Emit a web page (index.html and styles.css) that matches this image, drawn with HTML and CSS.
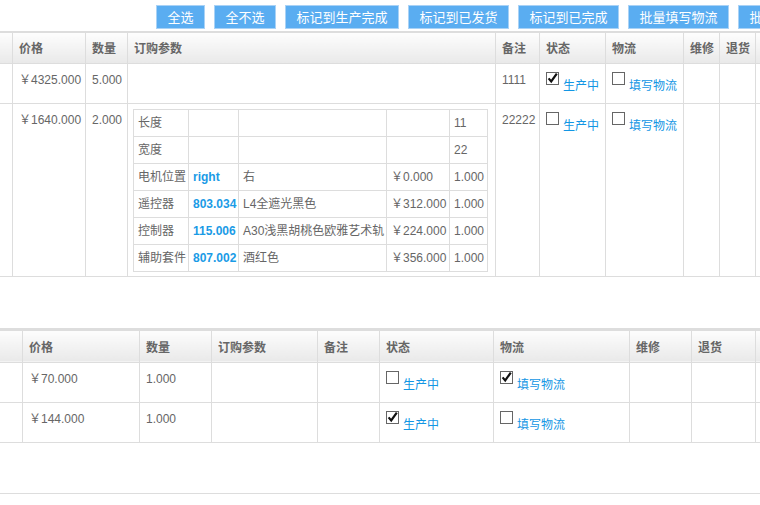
FILE: index.html
```html
<!DOCTYPE html>
<html lang="zh-CN">
<head>
<meta charset="utf-8">
<title>订单列表</title>
<link rel="stylesheet" href="styles.css">
</head>
<body>
<div class="page">
  <div class="toolbar">
    <button class="btn">全选</button>
    <button class="btn">全不选</button>
    <button class="btn">标记到生产完成</button>
    <button class="btn">标记到已发货</button>
    <button class="btn">标记到已完成</button>
    <button class="btn">批量填写物流</button>
    <button class="btn">批量打印</button>
  </div>

  <table class="orders t1">
    <colgroup>
      <col class="w13"><col class="w73"><col class="w42"><col class="w368"><col class="w44"><col class="w66"><col class="w78"><col class="w36"><col class="w36"><col class="w60">
    </colgroup>
    <thead>
      <tr><th></th><th>价格</th><th>数量</th><th>订购参数</th><th>备注</th><th>状态</th><th>物流</th><th>维修</th><th>退货</th><th></th></tr>
    </thead>
    <tbody>
      <tr class="row">
        <td></td><td>￥4325.000</td><td>5.000</td><td></td><td>1111</td>
        <td class="chk"><span class="cb"><svg viewBox="0 0 13 13" width="13" height="13"><rect x="0.5" y="0.5" width="12" height="12" fill="#fff" stroke="#666"/><path d="M2.6 6.4 L5.2 9.4 L10.8 1.6" fill="none" stroke="#111" stroke-width="2.2"/></svg></span><a class="lnk">生产中</a></td>
        <td class="chk"><span class="cb"><svg viewBox="0 0 13 13" width="13" height="13"><rect x="0.5" y="0.5" width="12" height="12" fill="#fff" stroke="#666"/></svg></span><a class="lnk">填写物流</a></td>
        <td></td><td></td><td></td>
      </tr>
      <tr>
        <td></td><td>￥1640.000</td><td>2.000</td>
        <td class="params">
          <table class="sub">
            <colgroup><col class="s55"><col class="s50"><col class="s148"><col class="s63"><col class="s38"></colgroup>
            <tr><td>长度</td><td></td><td></td><td></td><td>11</td></tr>
            <tr><td>宽度</td><td></td><td></td><td></td><td>22</td></tr>
            <tr><td>电机位置</td><td class="val">right</td><td>右</td><td>￥0.000</td><td>1.000</td></tr>
            <tr><td>遥控器</td><td class="val">803.034</td><td>L4全遮光黑色</td><td>￥312.000</td><td>1.000</td></tr>
            <tr><td>控制器</td><td class="val">115.006</td><td>A30浅黑胡桃色欧雅艺术轨</td><td>￥224.000</td><td>1.000</td></tr>
            <tr><td>辅助套件</td><td class="val">807.002</td><td>酒红色</td><td>￥356.000</td><td>1.000</td></tr>
          </table>
        </td>
        <td>22222</td>
        <td class="chk"><span class="cb"><svg viewBox="0 0 13 13" width="13" height="13"><rect x="0.5" y="0.5" width="12" height="12" fill="#fff" stroke="#666"/></svg></span><a class="lnk">生产中</a></td>
        <td class="chk"><span class="cb"><svg viewBox="0 0 13 13" width="13" height="13"><rect x="0.5" y="0.5" width="12" height="12" fill="#fff" stroke="#666"/></svg></span><a class="lnk">填写物流</a></td>
        <td></td><td></td><td></td>
      </tr>
    </tbody>
  </table>

  <table class="orders t2">
    <colgroup>
      <col class="w23"><col class="w117"><col class="w72"><col class="w106"><col class="w62"><col class="w114"><col class="w136"><col class="w62"><col class="w64"><col class="w60">
    </colgroup>
    <thead>
      <tr><th></th><th>价格</th><th>数量</th><th>订购参数</th><th>备注</th><th>状态</th><th>物流</th><th>维修</th><th>退货</th><th></th></tr>
    </thead>
    <tbody>
      <tr class="row">
        <td></td><td>￥70.000</td><td>1.000</td><td></td><td></td>
        <td class="chk"><span class="cb"><svg viewBox="0 0 13 13" width="13" height="13"><rect x="0.5" y="0.5" width="12" height="12" fill="#fff" stroke="#666"/></svg></span><a class="lnk">生产中</a></td>
        <td class="chk"><span class="cb"><svg viewBox="0 0 13 13" width="13" height="13"><rect x="0.5" y="0.5" width="12" height="12" fill="#fff" stroke="#666"/><path d="M2.6 6.4 L5.2 9.4 L10.8 1.6" fill="none" stroke="#111" stroke-width="2.2"/></svg></span><a class="lnk">填写物流</a></td>
        <td></td><td></td><td></td>
      </tr>
      <tr class="row">
        <td></td><td>￥144.000</td><td>1.000</td><td></td><td></td>
        <td class="chk"><span class="cb"><svg viewBox="0 0 13 13" width="13" height="13"><rect x="0.5" y="0.5" width="12" height="12" fill="#fff" stroke="#666"/><path d="M2.6 6.4 L5.2 9.4 L10.8 1.6" fill="none" stroke="#111" stroke-width="2.2"/></svg></span><a class="lnk">生产中</a></td>
        <td class="chk"><span class="cb"><svg viewBox="0 0 13 13" width="13" height="13"><rect x="0.5" y="0.5" width="12" height="12" fill="#fff" stroke="#666"/></svg></span><a class="lnk">填写物流</a></td>
        <td></td><td></td><td></td>
      </tr>
    </tbody>
  </table>

  <div class="sep"></div>
</div>
</body>
</html>
```

FILE: styles.css
```css
* { box-sizing: border-box; }
html, body { margin: 0; padding: 0; background: #fff; }
body {
  font-family: "Liberation Sans", "Noto Sans CJK SC", sans-serif;
  font-size: 12px;
  color: #666;
}
.page { width: 760px; overflow: hidden; }

.toolbar {
  display: flex;
  gap: 9px;
  height: 31px;
  padding: 5px 0 0 156px;
  white-space: nowrap;
}
.btn {
  flex: none;
  height: 24px;
  padding: 0 10.5px;
  border: 1px solid #a9d2f6;
  background: #5aadf1;
  color: #fff;
  font-family: "Noto Sans CJK SC", "Liberation Sans", sans-serif;
  font-size: 13px;
  line-height: 22px;
  cursor: pointer;
}

.orders {
  border-collapse: collapse;
  table-layout: fixed;
  width: 816px;
  margin: 0 0 50px -1px;
}
.t1 { margin-bottom: 51px; }
.orders th {
  height: 31px;
  padding: 0 6px;
  text-align: left;
  font-weight: bold;
  color: #666;
  white-space: nowrap;
  overflow: hidden;
  background: linear-gradient(#fdfdfd, #e9e9e9);
  border: 1px solid #ddd;
  border-top: 2px solid #ddd;
}
.t2 th { height: 33px; border-top-width: 3px; }
.orders td {
  border: 1px solid #ddd;
  padding: 6px 6px 4px;
  line-height: 20px;
  vertical-align: top;
  white-space: nowrap;
  overflow: hidden;
}
.orders tr.row > td { height: 40px; }
.orders td.params { padding: 5px 6px 4px 5px; }

.w13 { width: 13px; } .w23 { width: 23px; }
.w73 { width: 73px; } .w42 { width: 42px; } .w368 { width: 368px; }
.w44 { width: 44px; } .w66 { width: 66px; } .w78 { width: 78px; }
.w36 { width: 36px; } .w60 { width: 60px; }
.w117 { width: 117px; } .w72 { width: 72px; } .w106 { width: 106px; }
.w62 { width: 62px; } .w114 { width: 114px; } .w136 { width: 136px; }
.w64 { width: 64px; }

.cb {
  display: inline-block;
  width: 13px;
  height: 13px;
  margin: 2px 4px 5px 0;
  vertical-align: baseline;
}
.cb svg { display: block; overflow: visible; }
.lnk {
  color: #1296e4;
  font-family: "Noto Sans CJK SC", sans-serif;
  font-size: 12px;
  cursor: pointer;
}

.sub {
  border-collapse: collapse;
  table-layout: fixed;
  width: 354px;
}
.sub td {
  height: 27px;
  padding: 0 4px;
  border: 1px solid #ddd;
  line-height: 18px;
  vertical-align: middle;
  white-space: nowrap;
  overflow: hidden;
}
.sub td.val { color: #1a9be6; font-weight: bold; }
.s55 { width: 55px; } .s50 { width: 50px; } .s148 { width: 148px; }
.s63 { width: 63px; } .s38 { width: 38px; }

.sep { border-top: 1px solid #ddd; width: 760px; }
```
